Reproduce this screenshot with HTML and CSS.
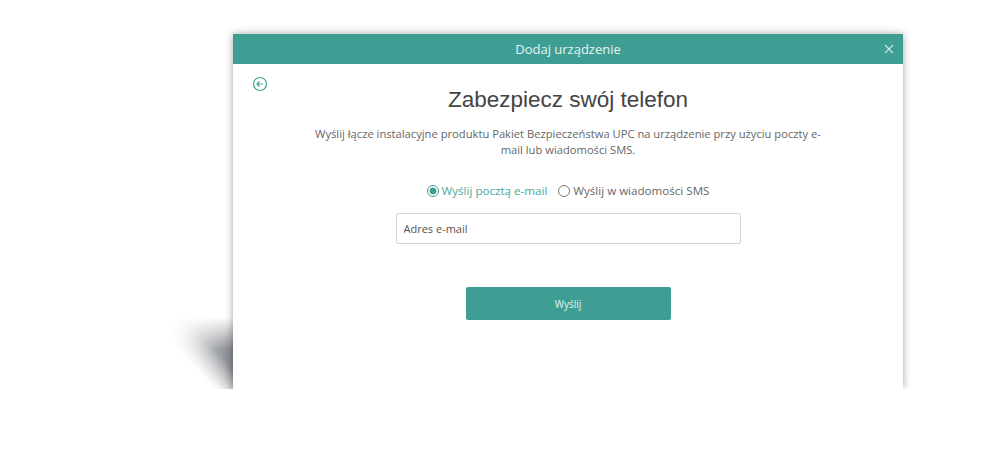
FILE: index.html
```html
<!DOCTYPE html>
<html lang="pl">
<head>
    <meta charset="UTF-8">
    <meta name="viewport" content="width=device-width, initial-scale=1.0">
    <title>Dodaj urządzenie</title>
    <link rel="stylesheet" href="styles.css">
</head>
<body>
    <div class="scene">
        <div class="window">
            <div class="header">
                <span class="header-title">Dodaj urządzenie</span>
                <svg class="close" width="10" height="10" viewBox="0 0 10 10">
                    <path d="M1 1l8 8M9 1l-8 8" stroke="#cfe9e5" stroke-width="1.1"/>
                </svg>
            </div>
            <div class="content">
                <div class="back">
                    <svg width="16" height="16" viewBox="0 0 16 16">
                        <circle cx="8" cy="8" r="6.5" fill="none" stroke="#3f9e93" stroke-width="1.2"/>
                        <path d="M11 8H5.2M7.6 5.4L5 8l2.6 2.6" fill="none" stroke="#3f9e93" stroke-width="1.2"/>
                    </svg>
                </div>
                <h1>Zabezpiecz swój telefon</h1>
                <p class="desc">Wyślij łącze instalacyjne produktu Pakiet Bezpieczeństwa UPC na urządzenie przy użyciu poczty e-mail lub wiadomości SMS.</p>
                <div class="options">
                    <label class="option selected"><span class="radio"></span>Wyślij pocztą e-mail</label>
                    <label class="option"><span class="radio"></span>Wyślij w wiadomości SMS</label>
                </div>
                <input class="email" type="text" placeholder="Adres e-mail">
                <button class="send">Wyślij</button>
            </div>
        </div>
    </div>
</body>
</html>
```

FILE: styles.css
```css
body {
    margin: 0;
    background: #fff;
    font-family: "Open Sans", Arial, sans-serif;
}

.scene {
    padding: 34px 0 0 233px;
}

.window {
    position: relative;
    width: 670px;
    height: 355px;
    background: #fff;
    box-shadow: 0 0 8px rgba(0,0,0,0.35);
}

/* slanted shadow under the bottom left corner */
.window::before {
    content: "";
    position: absolute;
    left: -72px;
    bottom: 0;
    width: 72px;
    height: 72px;
    background: linear-gradient(to right, rgba(255,255,255,0) 10%, rgba(80,85,92,0.7));
    -webkit-mask-image: linear-gradient(to bottom left, #000 35%, transparent 62%), linear-gradient(to bottom, transparent, #000 45%);
    -webkit-mask-composite: source-in;
    mask-image: linear-gradient(to bottom left, #000 35%, transparent 62%), linear-gradient(to bottom, transparent, #000 45%);
    mask-composite: intersect;
    z-index: -1;
}

.header {
    position: relative;
    height: 30px;
    background: #3f9e93;
    display: flex;
    align-items: center;
    justify-content: center;
}

.header-title {
    color: #e4f3f1;
    font-size: 13px;
}

.close {
    position: absolute;
    right: 9px;
    top: 10px;
}

.content {
    position: relative;
    display: flex;
    flex-direction: column;
    align-items: center;
    padding-top: 23px;
}

.back {
    position: absolute;
    left: 19px;
    top: 11px;
}

h1 {
    margin: 0;
    font-family: "Liberation Sans", Arial, sans-serif;
    font-weight: normal;
    font-size: 22.5px;
    color: #444;
}

.desc {
    width: 515px;
    margin: 13px 0 0;
    text-align: center;
    font-size: 11.2px;
    line-height: 16px;
    color: #666;
}

.options {
    display: flex;
    gap: 11px;
    margin-top: 25px;
    font-size: 11.6px;
    color: #666;
}

.option {
    display: flex;
    align-items: center;
    gap: 3px;
}

.option.selected {
    color: #4aa89d;
}

.radio {
    width: 12px;
    height: 12px;
    border: 1px solid #777;
    border-radius: 50%;
    box-sizing: border-box;
}

.selected .radio {
    border-color: #3f9e93;
    background: radial-gradient(circle, #3f9e93 3.2px, #fff 3.8px);
}

.email {
    width: 345px;
    height: 31px;
    box-sizing: border-box;
    margin-top: 15px;
    padding: 0 7px;
    border: 1px solid #d4d4d4;
    border-radius: 2px;
    font-family: "Open Sans", Arial, sans-serif;
    font-size: 11px;
}

.email::placeholder {
    color: #555;
}

.send {
    width: 205px;
    height: 33px;
    margin-top: 43px;
    background: #3f9e93;
    color: #e4f3f1;
    border: none;
    border-radius: 2px;
    font-family: "Open Sans", Arial, sans-serif;
    font-size: 10px;
}
```
